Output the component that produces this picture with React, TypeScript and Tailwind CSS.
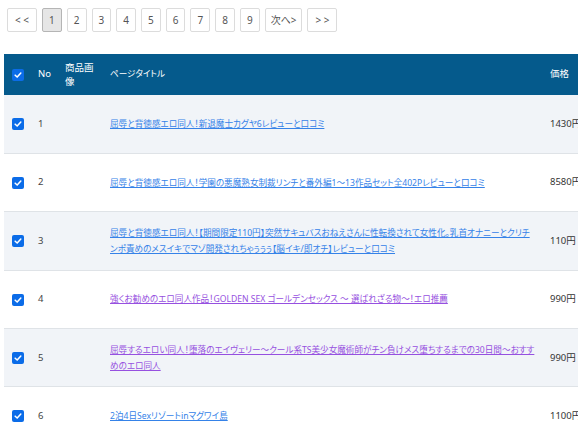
import React from "react";

const rows = [
  { no: 1, title: "屈辱と背徳感エロ同人！新退魔士カグヤ6レビューと口コミ", price: "1430円", visited: false },
  { no: 2, title: "屈辱と背徳感エロ同人！学園の悪魔熟女制裁リンチと番外編1〜13作品セット全402Pレビューと口コミ", price: "8580円", visited: false },
  { no: 3, title: "屈辱と背徳感エロ同人！【期間限定110円】突然サキュバスおねえさんに性転換されて女性化。乳首オナニーとクリチンポ責めのメスイキでマゾ開発されちゃぅぅぅ【脳イキ/即オチ】レビューと口コミ", price: "110円", visited: false },
  { no: 4, title: "強くお勧めのエロ同人作品！GOLDEN SEX ゴールデンセックス 〜 選ばれざる物〜！エロ推薦", price: "990円", visited: true },
  { no: 5, title: "屈辱するエロい同人！堕落のエイヴェリー〜クール系TS美少女魔術師がチン負けメス堕ちするまでの30日間〜おすすめのエロ同人", price: "990円", visited: true },
  { no: 6, title: "2泊4日Sexリゾートinマグワイ島", price: "1100円", visited: false },
];

const pages = ["< <", "1", "2", "3", "4", "5", "6", "7", "8", "9", "次へ>", "> >"];

function Check() {
  return (
    <span className="inline-flex h-[12px] w-[12px] items-center justify-center rounded-[2px] bg-[#0b6ce8] align-middle">
      <svg viewBox="0 0 12 12" className="h-[10px] w-[10px]">
        <path d="M2.6 6.2 L5 8.5 L9.4 3.6" fill="none" stroke="#fff" strokeWidth="1.8" strokeLinecap="round" strokeLinejoin="round" />
      </svg>
    </span>
  );
}

export default function App() {
  return (
    <div className="h-[424px] w-[578px] overflow-hidden bg-white font-['Noto_Sans','Noto_Sans_CJK_JP',sans-serif] text-[#333]">
      <div className="flex gap-[5px] pl-[7px] pt-[8px]">
        {pages.map((p) => (
          <span
            key={p}
            className={
              "flex h-[24px] items-center justify-center rounded-[2px] border text-[10px] text-[#555] " +
              (p === "次へ>" ? "px-[5px] " : p.length > 1 ? "px-[7px] " : "px-[6px] ") +
              (p === "1" ? "border-[#b5b5b5] bg-[#e6e6e6]" : "border-[#dcdcdc] bg-white")
            }
          >
            {p}
          </span>
        ))}
      </div>
      <div className="pl-[4px] pt-[22px]">
        <table className="w-[700px] table-fixed border-collapse text-[9.5px]">
          <colgroup>
            <col className="w-[27px]" />
            <col className="w-[27px]" />
            <col className="w-[45px]" />
            <col className="w-[440px]" />
            <col className="w-[161px]" />
          </colgroup>
          <thead>
            <tr className="h-[41px] bg-[#055a8c] text-left text-white">
              <th className="pl-[8px] align-middle font-normal">
                <Check />
              </th>
              <th className="px-[7px] align-middle font-normal">No</th>
              <th className="px-[7px] align-middle font-normal leading-[14px]">商品画像</th>
              <th className="px-[7px] align-middle text-[8.6px] font-normal [font-feature-settings:'palt']">ページタイトル</th>
              <th className="px-[7px] align-middle font-normal">価格</th>
            </tr>
          </thead>
          <tbody>
            {rows.map((r, i) => (
              <tr
                key={r.no}
                className={"h-[58.4px] border-b border-[#dfe3e7] " + (i % 2 === 0 ? "bg-[#f1f4f8]" : "bg-white")}
              >
                <td className="pl-[8px] align-middle">
                  <Check />
                </td>
                <td className="px-[7px] align-middle text-[#444]">{r.no}</td>
                <td className="px-[7px] align-middle"></td>
                <td className="px-[7px] align-middle text-[8.6px] leading-[16px]">
                  <a
                    href="#"
                    className={
                      "underline [font-feature-settings:'palt'] " +
                      (r.visited ? "text-[#9650e0] decoration-[#9650e0]" : "text-[#3582e8] decoration-[#3582e8]")
                    }
                  >
                    {r.title}
                  </a>
                </td>
                <td className="px-[7px] align-middle text-[#333]">{r.price}</td>
              </tr>
            ))}
          </tbody>
        </table>
      </div>
    </div>
  );
}
